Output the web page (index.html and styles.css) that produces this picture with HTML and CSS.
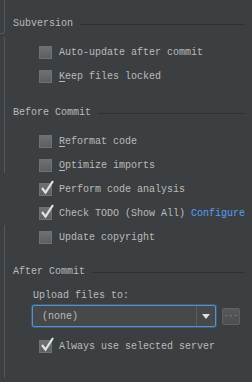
FILE: index.html
```html
<!DOCTYPE html>
<html lang="en">
  <head>
    <meta charset="UTF-8" />
    <title>Version Control</title>
    <link rel="stylesheet" href="styles.css">
  </head>
  <body>
    <div class="page">
      <div class="strip">
        <div class="piece top"></div>
        <div class="piece mid"></div>
        <div class="piece low"></div>
      </div>
      <div class="main">
        <div class="head first"><span>Subversion</span><div class="rule"></div></div>
        <div class="row first-row"><span class="box"></span><span>Auto-update after commit</span></div>
        <div class="row"><span class="box"></span><span><u>K</u>eep files locked</span></div>

        <div class="head second"><span>Before Commit</span><div class="rule"></div></div>
        <div class="row first-row"><span class="box"></span><span><u>R</u>eformat code</span></div>
        <div class="row"><span class="box"></span><span><u>O</u>ptimize imports</span></div>
        <div class="row"><span class="box checked"><svg width="16" height="16" viewBox="0 0 16 16"><polyline points="3,8 6.5,12.5 14,1" fill="none" stroke="#e2e2e2" stroke-width="2.2"/></svg></span><span>Perform code analysis</span></div>
        <div class="row"><span class="box checked"><svg width="16" height="16" viewBox="0 0 16 16"><polyline points="3,8 6.5,12.5 14,1" fill="none" stroke="#e2e2e2" stroke-width="2.2"/></svg></span><span>Check TODO (Show All) <span class="link">Configure</span></span></div>
        <div class="row"><span class="box"></span><span>Update copyright</span></div>

        <div class="head third"><span>After Commit</span><div class="rule"></div></div>
        <div class="upload">
          <div class="upload-label">Upload files to:</div>
          <div class="combo-line">
            <div class="combo">
              <span class="value">(none)</span>
              <span class="arrow"></span>
            </div>
            <div class="browse">&middot;&middot;&middot;</div>
          </div>
        </div>
        <div class="row always"><span class="box checked"><svg width="16" height="16" viewBox="0 0 16 16"><polyline points="3,8 6.5,12.5 14,1" fill="none" stroke="#e2e2e2" stroke-width="2.2"/></svg></span><span>Always use selected server</span></div>
      </div>
    </div>
  </body>
</html>
```
FILE: styles.css
```css
body {
  margin: 0;
  background-color: #3c3f41;
  color: #bbbbbb;
  font-family: "Liberation Mono", "DejaVu Sans Mono", monospace;
  font-size: 10px;
}

.page {
  display: flex;
  height: 382px;
}

/* bits of the neighbouring panel on the left */
.strip {
  width: 6px;
  display: flex;
  flex-direction: column;
}
.piece {
  width: 4px;
  border-right: 1px solid #55585a;
}
.top {
  height: 33px;
  border-bottom: 1px solid #55585a;
  border-bottom-right-radius: 3px;
}
.mid {
  height: 136px;
  margin-top: 3px;
}
.low {
  height: 153px;
  margin-top: 52px;
}

.main {
  flex: 1;
  padding: 0 10px 0 8px;
}

.head {
  display: flex;
  align-items: center;
  height: 14px;
  line-height: 14px;
}
.head .rule {
  flex: 1;
  margin-left: 7px;
  border-top: 1px solid #2e3133;
}
.first { margin-top: 17px; }
.second { margin-top: 18px; }
.third { margin-top: 16px; }

.row {
  display: flex;
  align-items: center;
  height: 24px;
  padding-left: 26px;
  white-space: nowrap;
}
.first-row { margin-top: 9px; }

u {
  text-decoration: underline;
  text-underline-offset: 2px;
}

.box {
  position: relative;
  box-sizing: border-box;
  width: 13px;
  height: 13px;
  margin-right: 7px;
  border: 1px solid #6f7274;
  background: linear-gradient(#6e7173, #5c5f61);
}
.box svg {
  position: absolute;
  left: -1px;
  top: -4px;
}

.link { color: #589df6; }

.upload {
  margin-top: 10px;
  padding-left: 19px;
}
.upload-label {
  height: 14px;
  line-height: 14px;
  padding-left: 1px;
}
.combo-line {
  display: flex;
  align-items: center;
  margin-top: 2px;
}
.combo {
  box-sizing: border-box;
  width: 184px;
  height: 22px;
  display: flex;
  align-items: center;
  border: 1px solid #5e8fc4;
  box-shadow: 0 0 0 1px #3a5a7e;
  border-radius: 2px;
  background-color: #45494a;
}
.value {
  flex: 1;
  padding-left: 9px;
}
.arrow {
  width: 18px;
  height: 100%;
  border-left: 1px solid #5a5e60;
  display: flex;
  align-items: center;
  justify-content: center;
}
.arrow::after {
  content: "";
  border-left: 4px solid transparent;
  border-right: 4px solid transparent;
  border-top: 5px solid #e0e0e0;
}
.browse {
  box-sizing: border-box;
  width: 18px;
  height: 17px;
  margin-left: 6px;
  border: 1px solid #5e6163;
  border-radius: 2px;
  background: linear-gradient(#55595b, #4b4f51);
  color: #9a9a9a;
  font-size: 8px;
  line-height: 13px;
  text-align: center;
}

.always { margin-top: 7px; }
```
